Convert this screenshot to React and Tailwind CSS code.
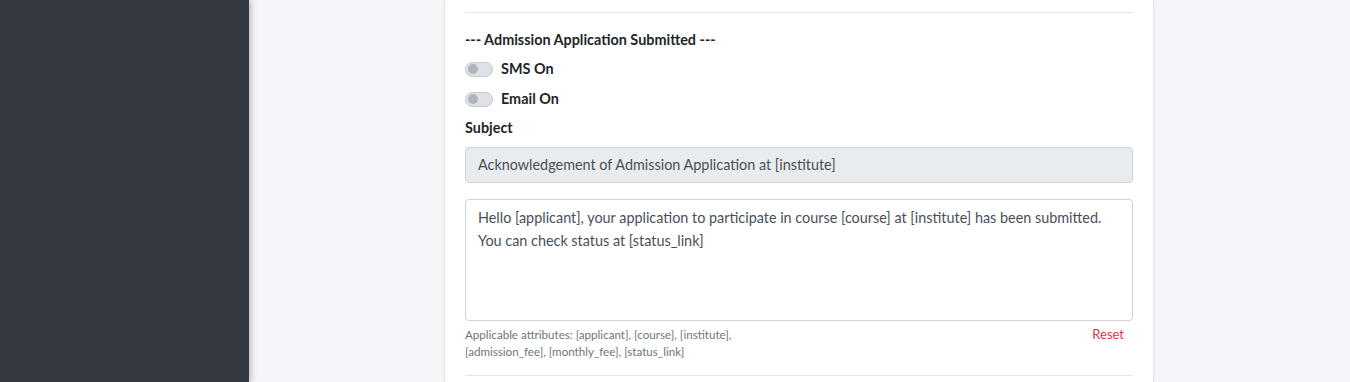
export default function App() {
    const toggles = ["SMS On", "Email On"];

    return (
        <div className="flex h-[382px] overflow-hidden bg-[#f4f6f9] font-['Lato',sans-serif] text-[#212529]">
            {/* SIDEBAR */}
            <div className="w-[249px] shrink-0 bg-[#343a40] shadow-[2px_0_6px_rgba(0,0,0,0.25)]"></div>

            {/* MAIN */}
            <div className="flex-1 flex justify-center pl-[195px] pr-[196px]">
                <div className="w-[710px] shrink-0 bg-white border-x border-[#e3e6ea] shadow-[0_0_2px_rgba(0,0,0,0.08)] px-5 pt-3">
                    <hr className="border-t border-[#e4e6e9]" />

                    <div className="pt-[16px] text-[14.4px] leading-[21px] font-bold">
                        --- Admission Application Submitted ---
                    </div>

                    {/* TOGGLES */}
                    <div className="mt-[4px] flex flex-col">
                        {toggles.map((t) => (
                            <label key={t} className="flex items-center h-[30px] gap-2">
                                <span className="relative w-[28px] h-[15px] rounded-full bg-[#dee2e6] border border-[#c6cbd0]">
                                    <span className="absolute left-[2px] top-[1.5px] w-[10px] h-[10px] rounded-full bg-[#adb5bd]"></span>
                                </span>
                                <span className="text-[14.4px] font-bold">{t}</span>
                            </label>
                        ))}
                    </div>

                    <div className="mt-[3px] text-[14.4px] leading-[21px] font-bold">Subject</div>

                    <div className="mt-[9px] h-[36px] flex items-center px-3 bg-[#e9ecef] border border-[#ced4da] rounded text-[14.4px] text-[#495057]">
                        Acknowledgement of Admission Application at [institute]
                    </div>

                    <div className="mt-[16px] h-[122px] px-3 py-[6px] bg-white border border-[#ced4da] rounded text-[14.4px] leading-[23px] text-[#495057]">
                        Hello [applicant], your application to participate in course [course] at [institute] has been submitted.
                        <br />
                        You can check status at [status_link]
                    </div>

                    <div className="mt-[5px] flex justify-between">
                        <div className="w-[290px] text-[11.6px] leading-[17px] text-[#6c757d]">
                            Applicable attributes: [applicant], [course], [institute], [admission_fee], [monthly_fee], [status_link]
                        </div>
                        <div className="pr-[9px] text-[13px] leading-[17px] text-[#dc3545]">Reset</div>
                    </div>

                    <hr className="mt-[15px] border-t border-[#e4e6e9]" />
                </div>
            </div>
        </div>
    );
}
